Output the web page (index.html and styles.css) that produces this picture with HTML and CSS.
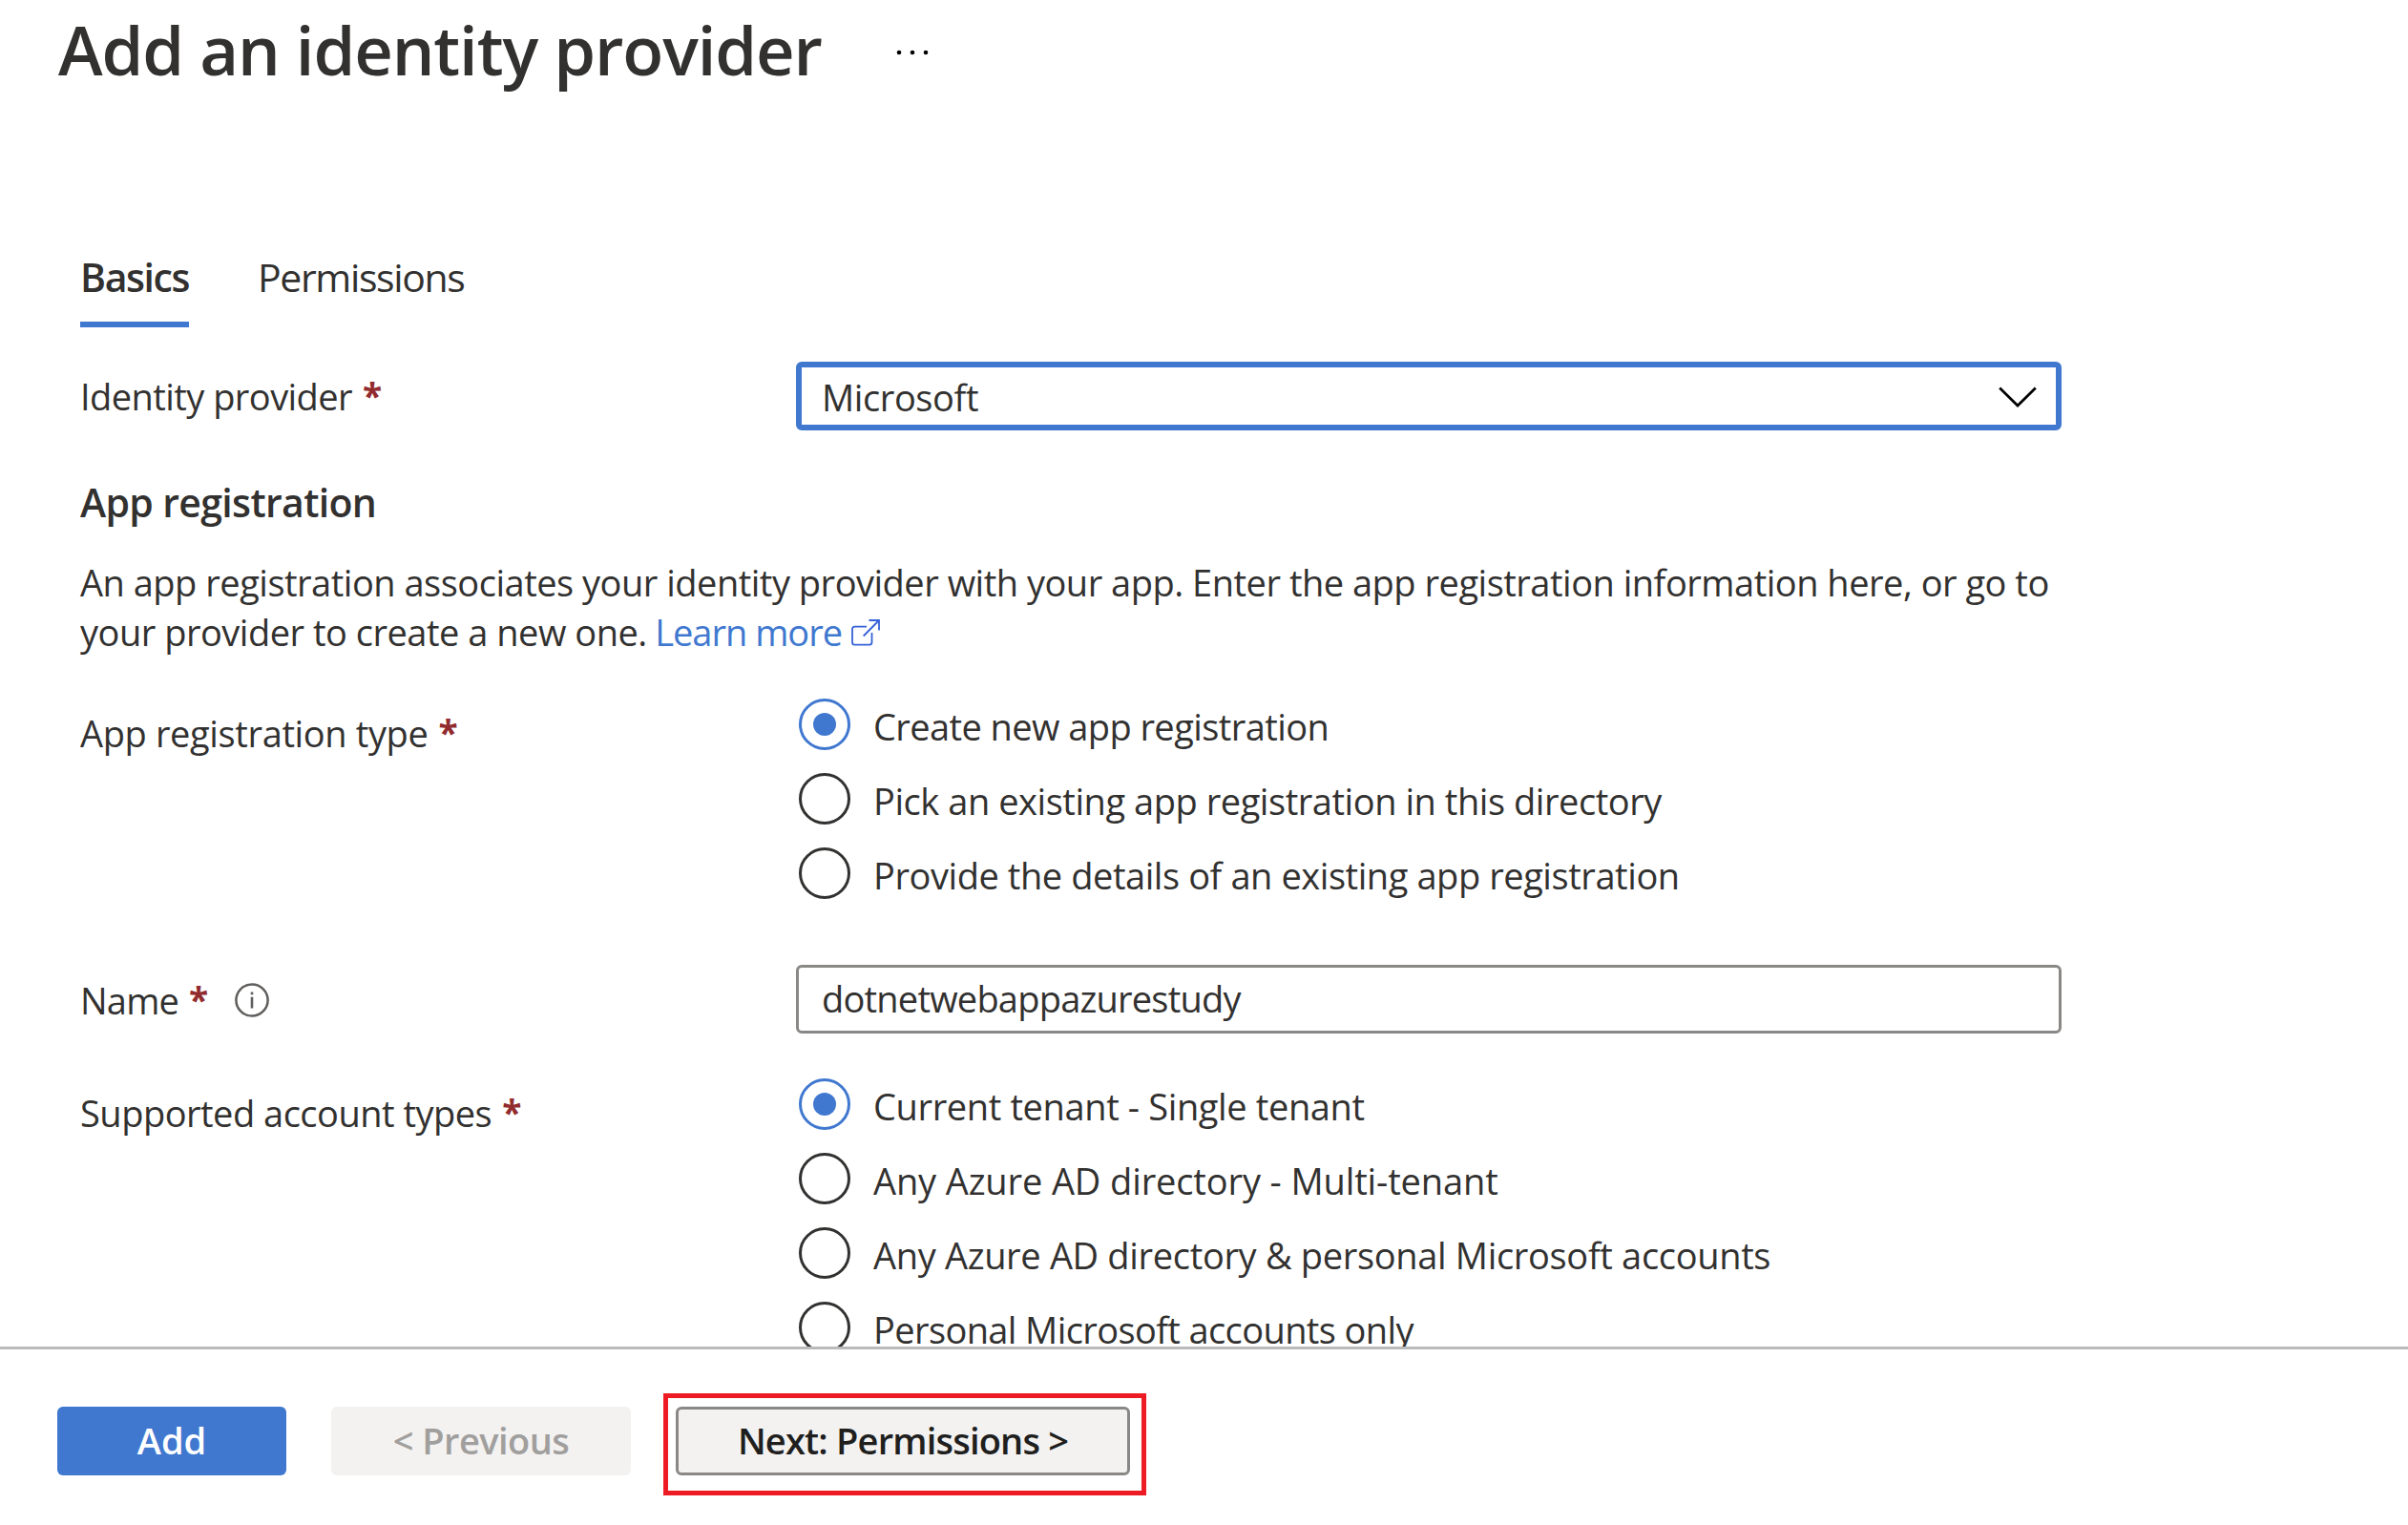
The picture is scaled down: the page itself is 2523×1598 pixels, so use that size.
FILE: index.html
```html
<!DOCTYPE html>
<html lang="en">
<head>
<meta charset="utf-8">
<title>Add an identity provider</title>
<link rel="stylesheet" href="styles.css">
</head>
<body>
<header class="header">
  <h1 class="title">Add an identity provider</h1>
  <svg class="more" width="34" height="6" viewBox="0 0 34 6"><circle cx="3" cy="3" r="2.3"/><circle cx="17" cy="3" r="2.3"/><circle cx="31" cy="3" r="2.3"/></svg>
</header>
<main class="content">
  <nav class="tabs">
    <a class="tab tab-active">Basics</a>
    <a class="tab">Permissions</a>
  </nav>
  <div class="row row-provider">
    <div class="label"><span class="t-provider">Identity provider</span><span class="req">*</span></div>
    <div class="field select"><span class="t-microsoft">Microsoft</span>
      <svg width="40" height="22" viewBox="0 0 40 22"><path d="M1.2 1.5 20 20 38.800 1.500" fill="none" stroke="#000" stroke-width="2.700"/></svg>
    </div>
  </div>
  <h2 class="section">App registration</h2>
  <p class="intro">An app registration associates your identity provider with your app. Enter the app registration information here, or go to<br>your provider to create a new one. <a class="link">Learn more</a><svg class="ext" width="30" height="28" viewBox="0 0 30 28"><path d="M16 7.700H3.500Q1 7.700 1 10.200V24Q1 26.700 3.500 26.700H19Q21.500 26.700 21.500 24V14M12.700 17.500 29 1M18.500 1H29V11.500"/></svg></p>
  <div class="row row-type">
    <div class="label label-top"><span class="t-type">App registration type</span><span class="req">*</span></div>
    <div class="radios">
      <div class="option"><span class="radio checked"></span><span class="t-create">Create new app registration</span></div>
      <div class="option"><span class="radio"></span><span class="t-pick">Pick an existing app registration in this directory</span></div>
      <div class="option"><span class="radio"></span><span class="t-details">Provide the details of an existing app registration</span></div>
    </div>
  </div>
  <div class="row row-name">
    <div class="label label-name"><span class="t-name">Name</span><span class="req">*</span>
      <svg class="info" width="36" height="36" viewBox="0 0 36 36"><circle cx="18" cy="18" r="16.600" fill="none" stroke="#605e5c" stroke-width="2.500"/><path d="M18 9.500V12.200M18 14.800V26.500" stroke="#605e5c" stroke-width="2.600"/></svg>
    </div>
    <div class="field input"><span class="t-value">dotnetwebappazurestudy</span></div>
  </div>
  <div class="row row-accounts">
    <div class="label label-top"><span class="t-accounts">Supported account types</span><span class="req">*</span></div>
    <div class="radios">
      <div class="option"><span class="radio checked"></span><span class="t-single">Current tenant - Single tenant</span></div>
      <div class="option"><span class="radio"></span><span class="t-multi">Any Azure AD directory - Multi-tenant</span></div>
      <div class="option"><span class="radio"></span><span class="t-any">Any Azure AD directory &amp; personal Microsoft accounts</span></div>
      <div class="option"><span class="radio"></span><span class="t-personal">Personal Microsoft accounts only</span></div>
    </div>
  </div>
</main>
<footer class="footer">
  <button class="btn btn-add">Add</button>
  <button class="btn btn-prev" disabled>&lt; Previous</button>
  <div class="next-wrap"><button class="btn btn-next">Next: Permissions &gt;</button><span class="highlight"></span></div>
</footer>
</body>
</html>
```
FILE: styles.css
```css
* { box-sizing: border-box; }
body {
  margin: 0;
  width: 2523px;
  height: 1598px;
  display: flex;
  flex-direction: column;
  overflow: hidden;
  background: #fff;
  color: #323130;
  font: 400 38px/52px "Open Sans", "Noto Sans", sans-serif;
  letter-spacing: -0.45px;
}
.header { height: 103px; flex: none; display: flex; align-items: center; padding-left: 61px; }
.title { margin: 0; padding-top: 1px; width: 878px; font-size: 70.5px; line-height: 100px; font-weight: 600; letter-spacing: -1.12px; white-space: nowrap; }
.more { margin-top: 7px; }

.content { height: 1308px; flex: none; padding: 140px 0 0 84px; overflow: hidden; }
.tabs { display: flex; gap: 72px; height: 100px; font-size: 41px; line-height: 94px; }
.tab { height: 100px; letter-spacing: -1.37px; white-space: nowrap; }
.tab-active { width: 114px; font-weight: 600; letter-spacing: -1.4px; border-bottom: 6px solid #4078d0; }

.row { display: grid; grid-template-columns: 750px 1326px; white-space: nowrap; }
.row-provider { margin-top: 36px; }
.row-type { margin-top: 44px; }
.row-name { margin-top: 69px; }
.row-accounts { margin-top: 47px; }

.label { display: flex; align-items: center; }
.label-name { padding-top: 2px; }
.label-top { align-items: flex-start; padding-top: 10px; }
.req { margin-left: 11px; color: #922b2e; font-size: 37px; font-weight: 700; letter-spacing: 0; }
.info { margin-left: 28px; }
.t-name { letter-spacing: -0.8px; }

.field { height: 72px; display: flex; align-items: center; border-radius: 6px; }
.select { justify-content: space-between; border: 6px solid #4078d0; padding: 2px 20px 0 21px; }
.input { border: 3px solid #8a8886; padding: 0 24px 3px; }

.section { margin: 50px 0 0; font-size: 41px; line-height: 50px; font-weight: 600; letter-spacing: -0.65px; }
.intro { margin: 33px 0 0; height: 104px; letter-spacing: -0.49px; white-space: nowrap; }
.link { color: #4078d0; margin-left: -1px; letter-spacing: -1px; }
.ext { margin-left: 10px; fill: none; stroke: #3562d8; stroke-width: 1.8px; vertical-align: baseline; }

.radios { display: flex; flex-direction: column; gap: 24px; }
.option { height: 54px; display: flex; align-items: center; gap: 24px; padding-left: 3px; }
.option span:last-child { padding-top: 3px; }
.radio { width: 54px; height: 54px; flex: none; display: grid; place-items: center; border: 3px solid #323130; border-radius: 50%; }
.checked { border-color: #4078d0; }
.checked::after { content: ""; width: 24px; height: 24px; border-radius: 50%; background: #4078d0; }

/* Per-string tracking */
.t-provider { letter-spacing: -0.55px; }
.t-microsoft { letter-spacing: -0.4px; }
.t-type { letter-spacing: -0.365px; }
.t-create { letter-spacing: -0.58px; }
.t-details { letter-spacing: -0.43px; }
.t-value { letter-spacing: -0.78px; }
.t-accounts { letter-spacing: -0.5px; }
.t-single { letter-spacing: -0.37px; }
.t-multi { letter-spacing: -0.12px; }
.t-any { letter-spacing: -0.325px; }
.t-personal { letter-spacing: -0.61px; }

.footer { height: 187px; flex: none; display: flex; gap: 47px; padding: 60px 0 0 60px; border-top: 3px solid #bababa; background: #fff; }
.btn { display: block; height: 72px; margin: 0; padding: 0 0 3px; border: 0; border-radius: 6px; font: 600 38px/52px "Open Sans", "Noto Sans", sans-serif; white-space: nowrap; }
.btn-add { width: 240px; background: #4078d0; color: #fff; }
.btn-prev { width: 314px; background: #f3f2f1; color: #a19f9d; letter-spacing: -0.55px; }
.btn-next { width: 476px; background: #f3f2f1; color: #201f1e; border: 3px solid #8a8886; letter-spacing: -0.8px; }
.next-wrap { position: relative; width: 476px; height: 72px; }
.highlight { position: absolute; top: -14px; right: -17px; bottom: -21px; left: -13px; border: 5px solid #ed1c24; }
```
